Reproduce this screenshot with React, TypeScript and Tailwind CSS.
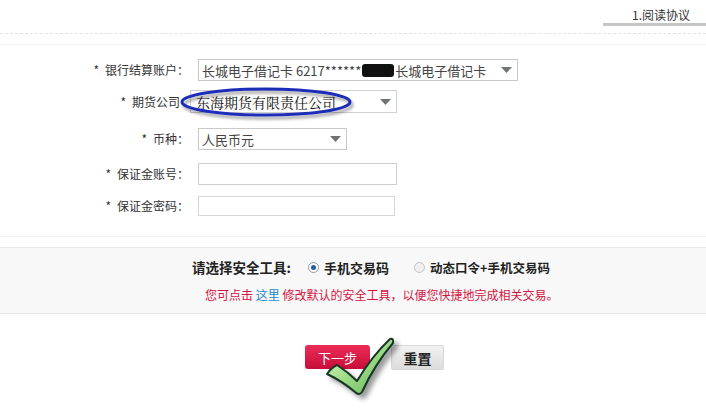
import React from 'react';

const font = { fontFamily: '"Noto Sans CJK SC", "Liberation Sans", sans-serif' };

const Arrow = () => (
  <svg width="11" height="6" viewBox="0 0 11 6" className="shrink-0">
    <path d="M0 0 L11 0 L5.5 6 Z" fill="#6f7378" />
  </svg>
);

const Label: React.FC<{ w: string; text: string }> = ({ w, text }) => (
  <div className={`${w} shrink-0 text-right text-[12px] text-[#333] leading-none whitespace-nowrap`}>
    <span className="mr-[6px]">*</span>
    {text}
  </div>
);

const App: React.FC = () => {
  return (
    <div className="relative w-[706px] h-[415px] bg-white overflow-hidden" style={font}>
      {/* header */}
      <div className="h-[23px] flex justify-end items-end pr-[16px] pb-[2px]">
        <span className="text-[12px] text-[#333] leading-none">1.阅读协议</span>
      </div>
      <div className="flex justify-end">
        <div className="w-[103px] h-[3px] bg-[#c6c6c6]" />
      </div>
      <div className="mt-[7px] border-t border-dashed border-[#e2e2e2]" />
      <div className="mt-[10px] border-t border-[#f2f2f2]" />

      {/* form */}
      <div className="flex flex-col">
        <div className="mt-[14px] flex items-center">
          <Label w="w-[189px]" text="银行结算账户：" />
          <div className="ml-[9px] w-[320px] h-[22px] border border-[#c9c9c9] flex items-center justify-between pl-[3px] pr-[5px]">
            <span className="text-[13px] text-[#444] leading-none flex items-center whitespace-nowrap">
              长城电子借记卡 6217******
              <span className="inline-block w-[32px] h-[13px] bg-[#111] rounded-[3px] mx-[1px]" />
              长城电子借记卡
            </span>
            <Arrow />
          </div>
        </div>

        <div className="mt-[9px] flex items-center">
          <Label w="w-[180px]" text="期货公司" />
          <div className="ml-[10px] w-[207px] h-[23px] border border-[#d0d0d0] flex items-center justify-between pl-[5px] pr-[5px]">
            <span className="text-[14px] text-[#111] leading-none whitespace-nowrap" style={{ fontFamily: '"Noto Serif CJK SC", "Noto Sans CJK SC", serif' }}>
              东海期货有限责任公司
            </span>
            <Arrow />
          </div>
        </div>

        <div className="mt-[15px] flex items-center">
          <Label w="w-[189px]" text="币种：" />
          <div className="ml-[9px] w-[149px] h-[22px] border border-[#c9c9c9] flex items-center justify-between pl-[3px] pr-[5px]">
            <span className="text-[13px] text-[#444] leading-none">人民币元</span>
            <Arrow />
          </div>
        </div>

        <div className="mt-[13px] flex items-center">
          <Label w="w-[189px]" text="保证金账号：" />
          <div className="ml-[9px] w-[199px] h-[22px] border border-[#cfcfcf]" />
        </div>

        <div className="mt-[11px] flex items-center">
          <Label w="w-[189px]" text="保证金密码：" />
          <div className="ml-[9px] w-[197px] h-[20px] border border-[#d6d6d6]" />
        </div>
      </div>

      <div className="mt-[20px] border-t border-[#efefef]" />

      {/* security tool band */}
      <div className="mt-[10px] h-[67px] bg-[#f8f8f8] border-t border-b border-[#e8e8e8] flex flex-col">
        <div className="mt-[13px] pl-[192px] flex items-center text-[13px] text-[#222] leading-none whitespace-nowrap">
          <span className="w-[108px] text-[13.5px] font-semibold">请选择安全工具:</span>
          <span className="ml-[8px] w-[11px] h-[11px] rounded-full border border-[#8a9aa8] bg-white flex items-center justify-center">
            <span className="w-[5px] h-[5px] rounded-full bg-[#1f5f9e]" />
          </span>
          <span className="ml-[5px] font-semibold">手机交易码</span>
          <span className="ml-[25px] w-[11px] h-[11px] rounded-full border border-[#c4c4c4] bg-[#f0f0f0]" />
          <span className="ml-[5px] text-[12.5px] font-semibold">动态口令+手机交易码</span>
        </div>
        <div className="mt-[14px] pl-[205px] text-[12px] leading-none text-[#d6143f] whitespace-nowrap">
          您可点击 <span className="text-[#1e88d0]">这里</span> 修改默认的安全工具，以便您快捷地完成相关交易。
        </div>
      </div>

      {/* buttons */}
      <div className="mt-[31px] flex pl-[305px] gap-[21px]">
        <button className="w-[65px] h-[24px] rounded-[3px] bg-gradient-to-b from-[#ec2a58] to-[#c80c38] text-white text-[13px] leading-none">
          下一步
        </button>
        <button className="w-[53px] h-[25px] rounded-[2px] bg-gradient-to-b from-[#f2f2f2] to-[#dcdcdc] border border-[#d8d8d8] text-[#222] text-[14px] font-semibold leading-none">
          重置
        </button>
      </div>

      {/* annotation ellipse */}
      <svg className="absolute left-[176px] top-[84px]" width="180" height="38" viewBox="0 0 180 38">
        <defs>
          <filter id="sh" x="-10%" y="-20%" width="120%" height="160%">
            <feDropShadow dx="2" dy="3" stdDeviation="1.6" floodColor="#000" floodOpacity="0.35" />
          </filter>
        </defs>
        <ellipse cx="90" cy="18" rx="84" ry="13" fill="none" stroke="#1f2fb8" strokeWidth="3" filter="url(#sh)" />
      </svg>

      {/* check mark */}
      <svg className="absolute left-[322px] top-[334px]" width="84" height="70" viewBox="0 0 84 70">
        <defs>
          <linearGradient id="gr" x1="0" y1="0" x2="1" y2="1">
            <stop offset="0" stopColor="#e6fad8" />
            <stop offset="0.5" stopColor="#9edc86" />
            <stop offset="1" stopColor="#5fae52" />
          </linearGradient>
          <filter id="ck" x="-20%" y="-20%" width="150%" height="150%">
            <feDropShadow dx="4" dy="4" stdDeviation="2.5" floodColor="#000" floodOpacity="0.4" />
          </filter>
        </defs>
        <path
          d="M5 40 Q9 34 15 31 Q26 38 35 47 Q50 22 68 5 Q72 4 71 9 Q53 30 40 58 Q37 62 33 58 Q20 47 5 40 Z"
          fill="url(#gr)"
          stroke="#173526"
          strokeWidth="2"
          strokeLinejoin="round"
          filter="url(#ck)"
        />
      </svg>
    </div>
  );
};

export default App;
